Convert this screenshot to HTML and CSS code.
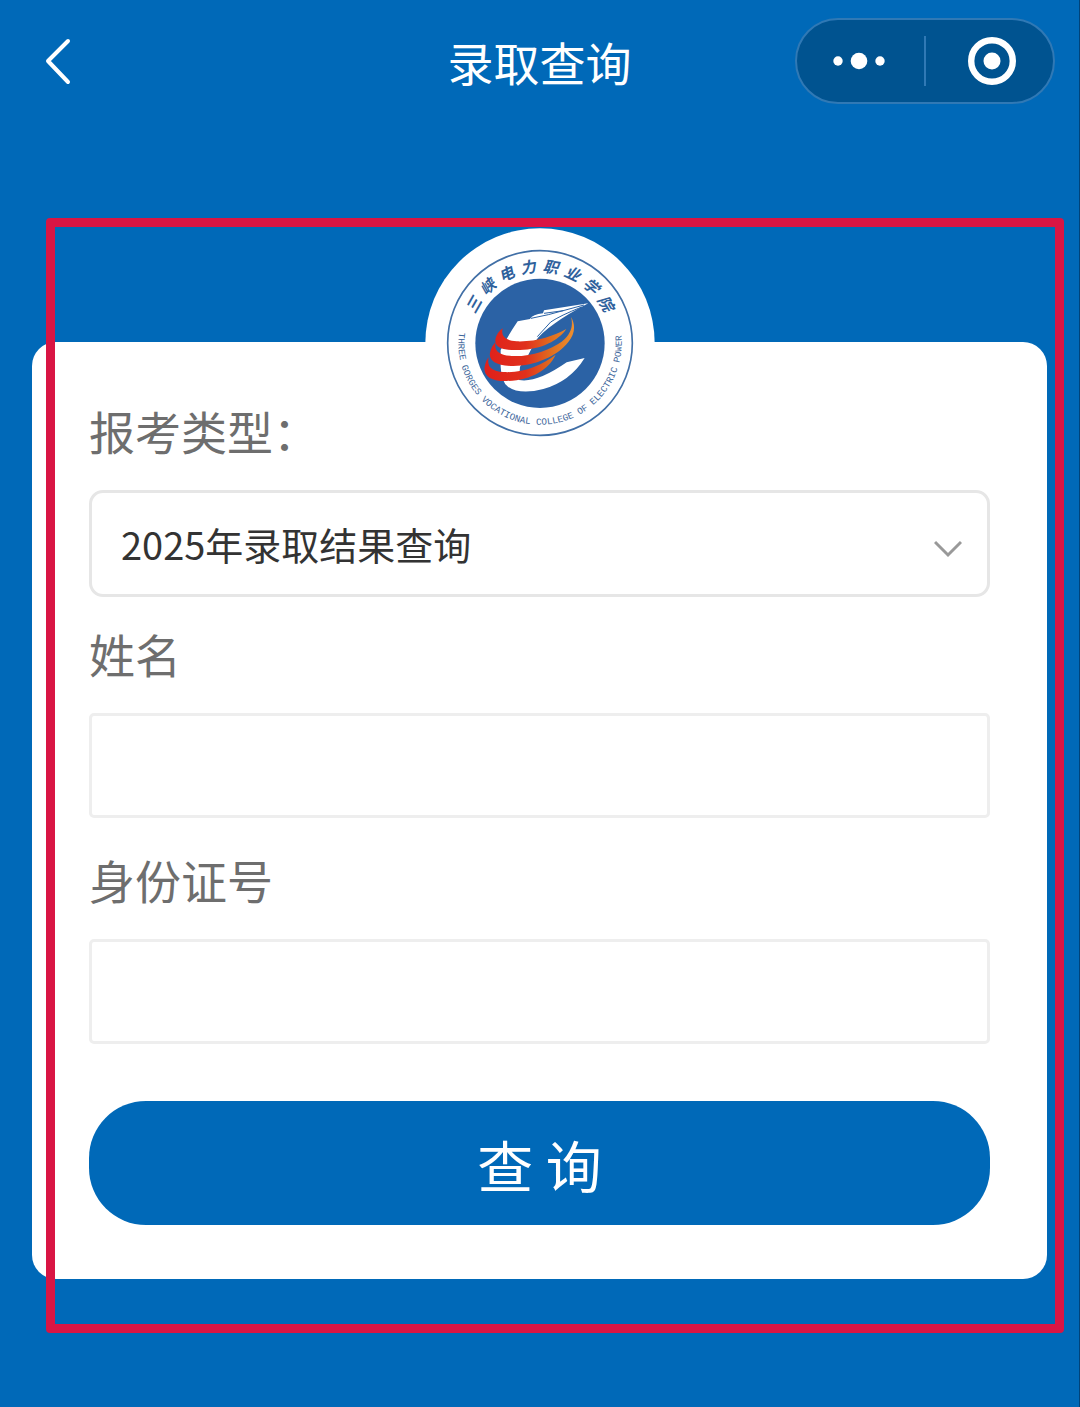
FILE: index.html
```html
<!DOCTYPE html>
<html lang="zh-CN">
<head>
<meta charset="utf-8">
<meta name="viewport" content="width=device-width, initial-scale=1">
<title>录取查询</title>
<link rel="stylesheet" href="styles.css">
</head>
<body>
<header class="navbar">
  <button class="back" type="button" aria-label="返回">
    <svg width="28" height="50" viewBox="0 0 28 50" fill="none" stroke="#fff" stroke-width="4" stroke-linecap="round" stroke-linejoin="round"><path d="M24 5 4 25 24 46"/></svg>
  </button>
  <h1 class="title">录取查询</h1>
  <div class="capsule">
    <button class="capsule-button" type="button" aria-label="更多">
      <svg width="52" height="18" viewBox="0 0 52 18" fill="#fff"><circle cx="5" cy="9" r="4.7"/><circle cx="26" cy="9" r="8.3"/><circle cx="47" cy="9" r="4.7"/></svg>
    </button>
    <button class="capsule-button" type="button" aria-label="关闭">
      <svg width="48" height="48" viewBox="0 0 48 48"><circle cx="24" cy="24" r="20.8" fill="none" stroke="#fff" stroke-width="6.4"/><circle cx="24" cy="24" r="8.5" fill="#fff"/></svg>
    </button>
  </div>
</header>

<main class="page">
  <form class="card">
    <svg class="logo" viewBox="15 24 690 690" role="img" aria-label="三峡电力职业学院">
      <defs>
        <linearGradient id="flame" gradientUnits="userSpaceOnUse" x1="195" y1="0" x2="465" y2="0">
          <stop offset="0" stop-color="#e0201b"/>
          <stop offset=".45" stop-color="#e0301c"/>
          <stop offset=".75" stop-color="#e0701f"/>
          <stop offset="1" stop-color="#ee9130"/>
        </linearGradient>
        <path id="motto" d="M117 338A245 245 0 1 0 600 320"/>
      </defs>
      <circle cx="360" cy="369" r="344" fill="#fff"/>
      <circle cx="360" cy="369" r="277" fill="none" stroke="#416fa6" stroke-width="5"/>
      <circle cx="360" cy="370" r="194" fill="#2b62a5"/>
      <g class="logo-cn">
        <text x="360" y="156" transform="rotate(-60 360 369)">三</text>
        <text x="360" y="156" transform="rotate(-43 360 369)">峡</text>
        <text x="360" y="156" transform="rotate(-26 360 369)">电</text>
        <text x="360" y="156" transform="rotate(-9 360 369)">力</text>
        <text x="360" y="156" transform="rotate(8 360 369)">职</text>
        <text x="360" y="156" transform="rotate(25 360 369)">业</text>
        <text x="360" y="156" transform="rotate(42 360 369)">学</text>
        <text x="360" y="156" transform="rotate(59 360 369)">院</text>
      </g>
      <text class="logo-en"><textPath href="#motto">THREE GORGES VOCATIONAL COLLEGE OF ELECTRIC POWER</textPath></text>
      <g fill="#fff">
        <path d="M293 304 330 297Q338 283 369 280L372 271 505 250Q440 284 405 310 362 340 345 365L322 410 300 440 297 480Q350 490 440 427L494 414Q450 485 370 507 300 525 264 500 244 486 242 440L242 390Q262 350 293 304Z"/>
      </g>
      <g fill="none" stroke="#2b62a5" stroke-width="3">
        <path d="M333 295 385 284 492 255"/>
        <path d="M372 280 430 272"/>
        <path d="M485 261Q420 287 392 306L352 350"/>
      </g>
      <g fill="url(#flame)">
        <path d="M248 325C242 348 256 362 290 364C350 366 400 348 439 327C415 362 365 388 300 390C250 392 224 384 226 360C228 345 238 332 248 325Z"/>
        <path d="M227 366C221 392 236 405 275 408C330 411 390 390 425 365C455 342 460 315 453 291C468 316 464 342 445 366C410 410 345 437 280 438C225 438 206 420 210 398C213 384 219 374 227 366Z"/>
        <path d="M206 412C200 440 214 453 250 456C310 460 365 435 407 404C385 450 335 480 260 483C205 484 188 462 195 436C198 424 201 418 206 412Z"/>
      </g>
    </svg>

    <div class="field field-select">
      <label for="type">报考类型：</label>
      <div class="select-box">
        <select id="type"><option>2025年录取结果查询</option></select>
        <svg class="chevron" width="28" height="18" viewBox="0 0 28 18" fill="none" stroke="#999" stroke-width="3"><path d="M1 2 14 15 27 2"/></svg>
      </div>
    </div>
    <div class="field">
      <label for="name">姓名</label>
      <input id="name" type="text">
    </div>
    <div class="field">
      <label for="idno">身份证号</label>
      <input id="idno" type="text">
    </div>
    <button class="submit" type="button">查 询</button>
  </form>
  <div class="highlight"></div>
</main>
</body>
</html>
```
FILE: styles.css
```css
* {
  box-sizing: border-box;
}

body {
  margin: 0;
  min-height: 100vh;
  background: #0069b8;
  border-right: 1px solid #00437a;
  color: #333;
  font-family: "Noto Sans CJK SC", sans-serif;
}

button,
input,
select {
  font: inherit;
  color: inherit;
}

button {
  padding: 0;
  border: 0;
  background: none;
  cursor: pointer;
}

svg {
  display: block;
}

.navbar {
  display: grid;
  grid-template-columns: 1fr auto 1fr;
  align-items: center;
  padding: 18px 24px 0;
}

.back {
  justify-self: start;
  padding: 0 20px;
}

.title {
  margin: 0;
  color: #fff;
  font-size: 46px;
  font-weight: 400;
  line-height: 86px;
}

.capsule {
  justify-self: end;
  display: grid;
  grid-template-columns: 1fr 1fr;
  width: 260px;
  height: 86px;
  border: 2px solid #3079b5;
  border-radius: 43px;
  background: #005390;
}

.capsule-button {
  display: grid;
  place-items: center;
  margin: 16px 0;
  padding-right: 4px;
}

.capsule-button + .capsule-button {
  margin-left: -1px;
  padding: 0 0 0 4px;
  border-left: 2px solid #3079b5;
}

.page {
  position: relative;
  padding: 238px 32px 128px;
}

.card {
  position: relative;
  display: flex;
  flex-direction: column;
  padding: 55px 57px 54px;
  border-radius: 24px;
  background: #fff;
}

.logo {
  position: absolute;
  top: -114px;
  left: 50%;
  width: 230px;
  height: 230px;
  margin-left: -115px;
}

.logo-cn {
  fill: #2f619c;
  font-size: 46px;
  font-style: italic;
  font-weight: 700;
  text-anchor: middle;
}

.logo-en {
  fill: #3f689c;
  font-family: "Liberation Mono", monospace;
  font-size: 28px;
}

.field {
  display: flex;
  flex-direction: column;
  gap: 27px;
  margin-bottom: 28px;
}

.field-select {
  margin-bottom: 23px;
}

.field label {
  color: #6e6e6e;
  font-size: 46px;
  line-height: 66px;
}

.field input {
  width: 100%;
  height: 105px;
  padding: 0 29px;
  border: 3px solid #eee;
  border-radius: 5px;
  background: #fff;
  font-size: 38px;
}

.select-box {
  display: grid;
  align-items: center;
}

.select-box > * {
  grid-area: 1 / 1;
}

.select-box select {
  appearance: none;
  width: 100%;
  height: 107px;
  padding: 0 29px;
  border: 3px solid #e6e6e6;
  border-radius: 14px;
  background: #fff;
  font-size: 38px;
}

.chevron {
  justify-self: end;
  margin: 10px 28px 0 0;
  pointer-events: none;
}

.submit {
  height: 124px;
  margin-top: 29px;
  border-radius: 57px;
  background: #0069b8;
  color: #fff;
  font-size: 56px;
}

.highlight {
  position: absolute;
  top: 114px;
  right: 15px;
  bottom: 74px;
  left: 46px;
  border: 9px solid #d91544;
  border-radius: 4px;
  pointer-events: none;
}
```
